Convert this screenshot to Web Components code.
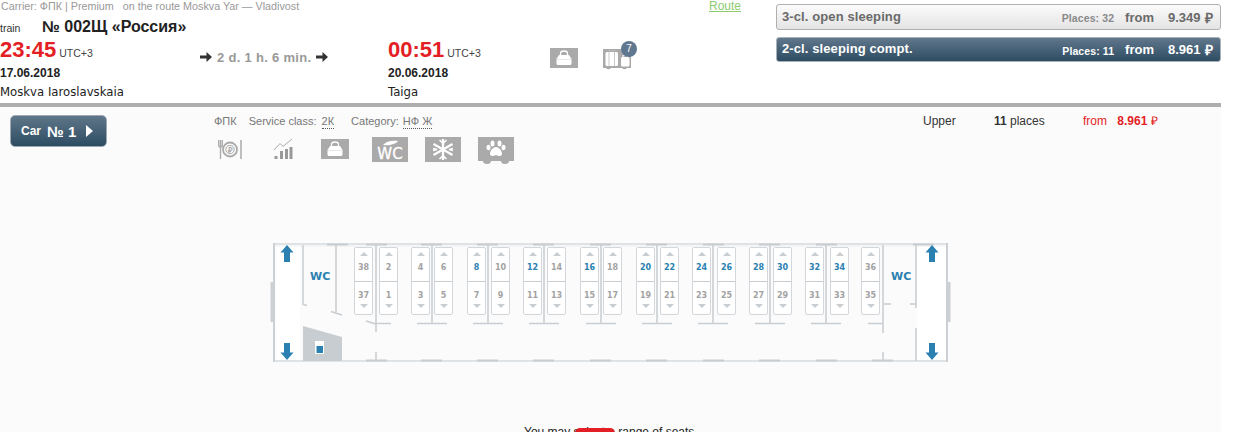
<!DOCTYPE html>
<html>
<head>
<meta charset="utf-8">
<title>Car plan</title>
<style>
    html, body { margin: 0; height: 432px; overflow: hidden; background: #fff; }
    body { font-family: "Liberation Sans", Arial, sans-serif; }
</style>
</head>
<body>
<train-page></train-page>

<script>
// small icons, drawn in a 28x20 grey box
const BAG = `<rect width="28" height="20" fill="#aaa"/>
    <path d="M10.500 7.500V5.500C10.500 4 11.500 3 14 3s3.500 1 3.500 2.500V7.500" fill="none" stroke="#fff" stroke-width="1.300"/>
    <path d="M9 7h10l2.500 4v4.500c0 .8-.6 1.500-1.500 1.500H8c-.9 0-1.500-.7-1.500-1.500V11z" fill="#fff"/>
    <path d="M7 11.500h14" stroke="#ddd" stroke-width=".7"/>`;

class JourneyPoint extends HTMLElement {
    constructor() {
        super();
        this.attachShadow({ mode: 'open' });
    }

    connectedCallback() {
        this.shadowRoot.innerHTML = `
            <style>
                :host { display: block; }
                .time { height: 24px; line-height: 24px; display: flex; align-items: baseline; color: #222; }
                b { font-size: 22px; color: #e31e24; }
                .tz { font-size: 10.500px; margin-left: 3px; color: #444; }
                .date { font-size: 12px; font-weight: bold; color: #222; margin-top: 3px; line-height: 16px; }
                .place { font-family: "DejaVu Sans", Verdana, sans-serif; font-size: 11.700px; color: #222; margin-top: 3px; line-height: 16px; }
            </style>
            <div class="time"><b>${this.getAttribute('time')}</b><span class="tz">UTC+3</span></div>
            <div class="date">${this.getAttribute('date')}</div>
            <div class="place">${this.getAttribute('place')}</div>
        `;
    }
}

class TariffButton extends HTMLElement {
    constructor() {
        super();
        this.attachShadow({ mode: 'open' });
    }

    connectedCallback() {
        this.shadowRoot.innerHTML = `
            <style>
                :host {
                    display: flex;
                    align-items: center;
                    box-sizing: border-box;
                    height: 26px;
                    padding: 0 5px 0 5px;
                    border: 1px solid #b0b0b0;
                    border-radius: 3px;
                    background: linear-gradient(#fbfbfb, #e4e4e4);
                    color: #6a6a6a;
                    font-weight: bold;
                    font-size: 13px;
                }
                :host([active]) {
                    height: 25px;
                    background: linear-gradient(#61778c, #2d4c62);
                    color: #fff;
                    border-color: #a8b0b8;
                }
                .name { flex: 1; letter-spacing: .1px; margin-top: -2px; }
                .places { font-size: 10.500px; color: #8a8a8a; letter-spacing: .1px; margin-right: 11px; margin-top: 2px; }
                :host([active]) .places { color: #fff; }
                .sum { margin-left: 14px; width: 32px; }
                .rub { margin-left: 5px; width: 10px; font-size: 14px; }
            </style>
            <span class="name">${this.getAttribute('name')}</span>
            <span class="places">Places: ${this.getAttribute('places')}</span>
            <span>from</span>
            <span class="sum">${this.getAttribute('price')}</span>
            <span class="rub">₽</span>
        `;
    }
}

class TrainHeader extends HTMLElement {
    constructor() {
        super();
        this.attachShadow({ mode: 'open' });
    }

    connectedCallback() {
        this.shadowRoot.innerHTML = `
            <style>
                :host {
                    display: flex;
                    box-sizing: border-box;
                    width: 1221px;
                    height: 103px;
                }
                .info { width: 776px; flex: none; }
                .top { display: flex; justify-content: space-between; width: 741px; height: 12px; line-height: 12px; font-size: 10.750px; color: #999; }
                .top span { white-space: pre; padding-left: 1px; }
                .top a { font-size: 12px; color: #8ccb6e; text-decoration: underline; }
                .train { display: flex; align-items: baseline; height: 26px; line-height: 29px; }
                .train small { width: 42px; font-size: 10.500px; color: #333; }
                .train b { font-size: 16px; color: #222; }
                .journey { display: grid; grid-template-columns: 200px 188px 162px 53px 60px; }
                .duration { display: flex; align-items: center; gap: 5px; height: 38px; color: #999; font-weight: bold; font-size: 13px; letter-spacing: .3px; }
                .luggage { margin-top: 10px; position: relative; width: 30px; height: 22px; }
                .bag { margin-top: 10px; }
                .badge {
                    position: absolute; left: 18px; top: -7px;
                    width: 16px; height: 16px; border-radius: 50%;
                    background: #5f7890; color: #fff;
                    font-size: 10px; line-height: 16px; text-align: center;
                }
                svg { display: block; }
                .tariffs { flex: 1; padding-top: 4px; display: flex; flex-direction: column; gap: 7px; }
            </style>
            <div class="info">
                <div class="top"><span>Carrier: ФПК | Premium   on the route Moskva Yar — Vladivost</span><a>Route</a></div>
                <div class="train"><small>train</small><b>№ 002Щ «Россия»</b></div>
                <div class="journey">
                    <journey-point time="23:45" date="17.06.2018" place="Moskva Iaroslavskaia"></journey-point>
                    <div class="duration">
                        <svg width="12" height="10" viewBox="0 0 12 10"><path d="M0 3.500h6.500V0L12 5 6.500 10V6.500H0z" fill="#333"/></svg>
                        <span>2 d. 1 h. 6 min.</span>
                        <svg width="12" height="10" viewBox="0 0 12 10"><path d="M0 3.500h6.500V0L12 5 6.500 10V6.500H0z" fill="#333"/></svg>
                    </div>
                    <journey-point time="00:51" date="20.06.2018" place="Taiga"></journey-point>
                    <div class="bag"><svg width="28" height="20" viewBox="0 0 28 20">${BAG}</svg></div>
                    <div class="luggage">
                        <svg width="30" height="23" viewBox="0 0 30 23">
                            <path d="M0 1h28v19h-4a3 3 0 0 1-5 0H8a3 3 0 0 1-5 0H0z" fill="#aaa"/>
                            <rect x="2.500" y="4" width="12.500" height="14" rx="1.500" fill="#fff"/>
                            <path d="M6 4V2.500h5.500V4M6 4v14M11.500 4v14" fill="none" stroke="#bbb" stroke-width=".8"/>
                            <rect x="18" y="9" width="8.500" height="9.500" rx="1.500" fill="#fff"/>
                            <path d="M20 9V7h4.500v2" fill="none" stroke="#fff"/>
                        </svg>
                        <span class="badge">7</span>
                    </div>
                </div>
            </div>
            <div class="tariffs">
                <tariff-button name="3-cl. open sleeping" places="32" price="9.349"></tariff-button>
                <tariff-button active name="2-cl. sleeping compt." places="11" price="8.961"></tariff-button>
            </div>
        `;
    }
}

class CarSeat extends HTMLElement {
    constructor() {
        super();
        this.attachShadow({ mode: 'open' });
    }

    connectedCallback() {
        const free = this.hasAttribute('free') ? 'free' : '';
        this.shadowRoot.innerHTML = `
            <style>
                :host {
                    position: absolute;
                    top: 12px;
                    box-sizing: border-box;
                    width: 19px;
                    height: 68px;
                    border: 1px solid #d3d7db;
                    border-radius: 2px;
                    background: #fff;
                    display: flex;
                    flex-direction: column;
                    font-family: "DejaVu Sans", Verdana, sans-serif;
                    font-size: 8px;
                    font-weight: bold;
                    color: #a2a2a2;
                    text-align: center;
                }
                .half { height: 33px; position: relative; line-height: 11px; box-sizing: border-box; }
                .up { border-bottom: 1px solid #c8cdd1; height: 34px; padding-top: 14px; }
                .down { padding-top: 8px; }
                .free { color: #2a80b0; }
                i { position: absolute; left: 4.500px; border: 4px solid transparent; border-top-width: 0; border-bottom: 4px solid #c8cdd1; top: 4px; width: 0; height: 0; }
                .down i { border-bottom-width: 0; border-top: 4px solid #c8cdd1; border-bottom-color: transparent; top: 22px; }
            </style>
            <div class="half up"><i></i><span class="${free}">${this.getAttribute('upper')}</span></div>
            <div class="half down"><span>${this.getAttribute('lower')}</span><i></i></div>
        `;
    }
}

class CarMap extends HTMLElement {
    constructor() {
        super();
        this.attachShadow({ mode: 'open' });
    }

    connectedCallback() {
        // coordinates below are the ones of the page, the viewBox shifts them
        const seats = [
            [38, 37, 354], [2, 1, 379], [4, 3, 411], [6, 5, 434], [8, 7, 467, 1],
            [10, 9, 491], [12, 11, 523, 1], [14, 13, 547], [16, 15, 580, 1], [18, 17, 603],
            [20, 19, 636, 1], [22, 21, 660, 1], [24, 23, 692, 1], [26, 25, 717, 1], [28, 27, 749, 1],
            [30, 29, 773, 1], [32, 31, 805, 1], [34, 33, 830, 1], [36, 35, 861]
        ];
        const walls = [376, 432, 488, 544, 601, 657, 713, 770, 826];
        const stubsTop = [327, 366, 421, 477, 533, 590, 646, 703, 759, 816, 913];
        const stubsBottom = [366, 421, 477, 533, 590, 646, 703, 759, 816, 872];

        let lines = '';
        for (const x of walls) {
            lines += `<path d="M${x} 245V324"/>`;
            lines += `<path d="M${x === 376 ? 376 : x - 15} 323.500H${x + 15}"/>`;
        }
        let stubs = '';
        for (const x of stubsTop) stubs += `<path d="M${x} 244.500h21"/>`;
        for (const x of stubsBottom) stubs += `<path d="M${x} 360.500h21"/>`;

        const arrow = (x, y, down) => `<path transform="translate(${x} ${y})${down ? ' scale(1 -1)' : ''}"
            d="M0 0L6.500 7.500H3V17H-3V7.500H-6.500z" fill="#2a80b0"/>`;

        this.shadowRoot.innerHTML = `
            <style>
                :host { display: block; position: relative; width: 690px; height: 135px; }
                svg { position: absolute; left: 0; top: 0; }
                .wc { font-family: "DejaVu Sans", Verdana, sans-serif; font-weight: bold; font-size: 11px; fill: #2a80b0; }
            </style>
            <svg width="690" height="135" viewBox="265 235 690 135">
                <rect x="276" y="245" width="24" height="115" fill="#fff"/>
                <rect x="917" y="245" width="29" height="115" fill="#fff"/>
                <path d="M274 244H947M274 361H947" stroke="#e0e3e6" stroke-width="2" fill="none"/>
                <path d="M274 246H946" stroke="#eceef0" fill="none"/>
                <path d="M274 243V362M947 243V362" stroke="#ccd0d4" stroke-width="2" fill="none"/>
                <path d="M272 282V322M949 282V322" stroke="#ccd0d4" stroke-width="3" fill="none"/>
                <g stroke="#c8cdd1" stroke-width="2" fill="none">${stubs}</g>
                <g stroke="#c8cdd1" stroke-width="1.500" fill="none">${lines}
                    <path d="M303 245V304.500L307 305.500"/>
                    <path d="M336 245V312"/>
                    <path d="M331 311.500L342 315"/>
                    <path d="M366 321L376 324"/>
                    <path d="M376 324V332M376 352V361"/>
                    <path d="M883 245V333M883 352V361"/>
                    <path d="M868 323.500H883"/>
                    <path d="M883 304H891M910 304H916"/>
                    <path d="M916 245V308M916 328V361"/>
                </g>
                <path d="M303 326L342 337V361H303z" fill="#c8cdd1"/>
                <rect x="315" y="341" width="9" height="13" fill="#fff"/>
                <rect x="316.500" y="346" width="6.500" height="7" fill="#2a80b0"/>
                ${arrow(287, 245)}
                ${arrow(287, 360, true)}
                ${arrow(932, 245)}
                ${arrow(932, 360, true)}
                <text class="wc" x="310" y="280">WC</text>
                <text class="wc" x="891" y="280">WC</text>
            </svg>
            ${seats.map(s => `<car-seat upper="${s[0]}" lower="${s[1]}" ${s[3] ? 'free' : ''} style="left:${s[2] - 265}px"></car-seat>`).join('')}
        `;
    }
}

class CarPanel extends HTMLElement {
    constructor() {
        super();
        this.attachShadow({ mode: 'open' });
    }

    connectedCallback() {
        this.shadowRoot.innerHTML = `
            <style>
                :host {
                    display: block;
                    width: 1221px;
                    height: 325px;
                    border-top: 4px solid #aeaeae;
                    box-sizing: content-box;
                    background: #fbfbfb;
                    overflow: hidden;
                }
                .head { display: flex; height: 128px; }
                .car {
                    box-sizing: border-box;
                    width: 97px; height: 32px;
                    margin: 8px 0 0 10px;
                    border: 1px solid #9fa8b0;
                    border-radius: 5px;
                    background: linear-gradient(#5f7689, #2d4c62);
                    color: #fff;
                    font-weight: bold;
                    display: flex; align-items: center;
                    padding-left: 10px;
                }
                .car small { font-size: 12px; margin-right: 6px; }
                .car span { font-size: 15px; }
                .car i { margin-left: 10px; border: 6px solid transparent; border-left: 7px solid #fff; border-right-width: 0; }
                .mid { margin-left: 107px; width: 709px; padding-top: 8px; }
                .line { display: flex; height: 14px; line-height: 13px; font-size: 11px; color: #777; white-space: pre; }
                .line u { text-decoration: none; border-bottom: 1px dotted #555; height: 13px; margin-left: 4px; }
                .line u.first { margin-left: 5px; }
                .line span.gap { margin-left: 12px; }
                .line span.gap2 { margin-left: 17px; }
                .icons { display: flex; margin-top: 8px; align-items: flex-start; }
                svg { display: block; }
                .right { display: flex; padding-top: 8px; font-size: 12px; line-height: 13px; color: #333; }
                .upper { width: 71px; }
                .count { width: 89px; }
                .price { color: #e31e24; }
                .price b { margin-left: 7px; }
                .map { margin-left: 265px; }
                .hint { margin-top: 55px; margin-left: 524px; font-size: 12px; line-height: 14px; color: #222; white-space: pre; }
                .mark { position: relative; }
                .mark::after {
                    content: '';
                    position: absolute;
                    left: 1px; right: 0; top: 3px; height: 20px;
                    border-radius: 5px;
                    background: #e31e24;
                }
            </style>
            <div class="head">
                <div class="car"><small>Car</small><span>№ 1</span><i></i></div>
                <div class="mid">
                    <div class="line"><span>ФПК</span><span class="gap">Service class:</span><u class="first">2К</u><span class="gap2">Category:</span><u>НФ Ж</u></div>
                    <div class="icons">
                        <svg style="margin-left:4px;margin-top:3px" width="24" height="19" viewBox="0 0 24 19" fill="none" stroke="#aaa">
                            <path d="M2.500 0v19M.7 0v5c0 1 1 2 1.800 2s1.800-1 1.800-2V0" stroke-width="1.300"/>
                            <circle cx="12" cy="9.500" r="7" stroke-width="1.800"/>
                            <circle cx="12" cy="9.500" r="4.200" stroke-width="1"/>
                            <text x="12" y="12.500" font-size="8" font-weight="bold" text-anchor="middle" fill="#aaa" stroke="none">₽</text>
                            <path d="M23 0v19" stroke-width="1.500"/>
                        </svg>
                        <svg style="margin-left:32px;margin-top:2px" width="19" height="20" viewBox="0 0 19 20" fill="none" stroke="#aaa">
                            <path d="M0 11L6 4.500l3 3L18 0" stroke-width="1"/>
                            <path d="M2 17v3M7.500 12v8M12.500 10v10M17 8v12" stroke-width="3" stroke="#999"/>
                        </svg>
                        <svg style="margin-left:28px;margin-top:2px" width="28" height="20" viewBox="0 0 28 20">${BAG}</svg>
                        <svg style="margin-left:23px" width="36" height="25" viewBox="0 0 36 25">
                            <rect width="36" height="25" fill="#aaa"/>
                            <path d="M11 8c3-4 9-5 15-4-2 3-9 5-15 4z" fill="#fff"/>
                            <text x="18" y="22" font-family="DejaVu Sans, sans-serif" font-size="15" text-anchor="middle" fill="#fff" stroke="#fff" stroke-width=".3">WC</text>
                        </svg>
                        <svg style="margin-left:17px" width="36" height="25" viewBox="0 0 36 25">
                            <rect width="36" height="25" fill="#aaa"/>
                            <g stroke="#fff" stroke-width="2.300">
                                <path d="M18 2v21M8.500 7L27.500 18M27.500 7L8.500 18"/>
                                <path d="M14.500 3L18 6.500 21.500 3M14.500 22L18 18.500 21.500 22M8 11.500l4 1-4 1M28 11.500l-4 1 4 1" fill="none" stroke-width="1.500"/>
                            </g>
                        </svg>
                        <svg style="margin-left:17px" width="36" height="27" viewBox="0 0 36 27">
                            <path d="M0 0H36V24H31a4 3 0 0 1-8 0H13a4 3 0 0 1-8 0H0z" fill="#aaa"/>
                            <g fill="#fff">
                                <path d="M18 10c-3 0-6 4-6 6.500s2 2.500 3 2.500 2-1 3-1 2 1 3 1 3 0 3-2.500-3-6.500-6-6.500z"/>
                                <ellipse cx="14.500" cy="6.500" rx="2" ry="3"/>
                                <ellipse cx="21.500" cy="6.500" rx="2" ry="3"/>
                                <ellipse cx="10.500" cy="10.500" rx="2" ry="2.800"/>
                                <ellipse cx="25.500" cy="10.500" rx="2" ry="2.800"/>
                            </g>
                        </svg>
                    </div>
                </div>
                <div class="right">
                    <span class="upper">Upper</span>
                    <span class="count"><b>11</b> places</span>
                    <span class="price">from <b>8.961</b> ₽</span>
                </div>
            </div>
            <car-map class="map"></car-map>
            <div class="hint">You may <span class="mark">select a</span> range of seats</div>
        `;
    }
}

class TrainPage extends HTMLElement {
    constructor() {
        super();
        this.attachShadow({ mode: 'open' });
    }

    connectedCallback() {
        this.shadowRoot.innerHTML = `
            <style>
                :host { display: block; width: 1246px; height: 432px; overflow: hidden; }
            </style>
            <train-header></train-header>
            <car-panel></car-panel>
        `;
    }
}

customElements.define('journey-point', JourneyPoint);
customElements.define('tariff-button', TariffButton);
customElements.define('train-header', TrainHeader);
customElements.define('car-seat', CarSeat);
customElements.define('car-map', CarMap);
customElements.define('car-panel', CarPanel);
customElements.define('train-page', TrainPage);
</script>
</body>
</html>
